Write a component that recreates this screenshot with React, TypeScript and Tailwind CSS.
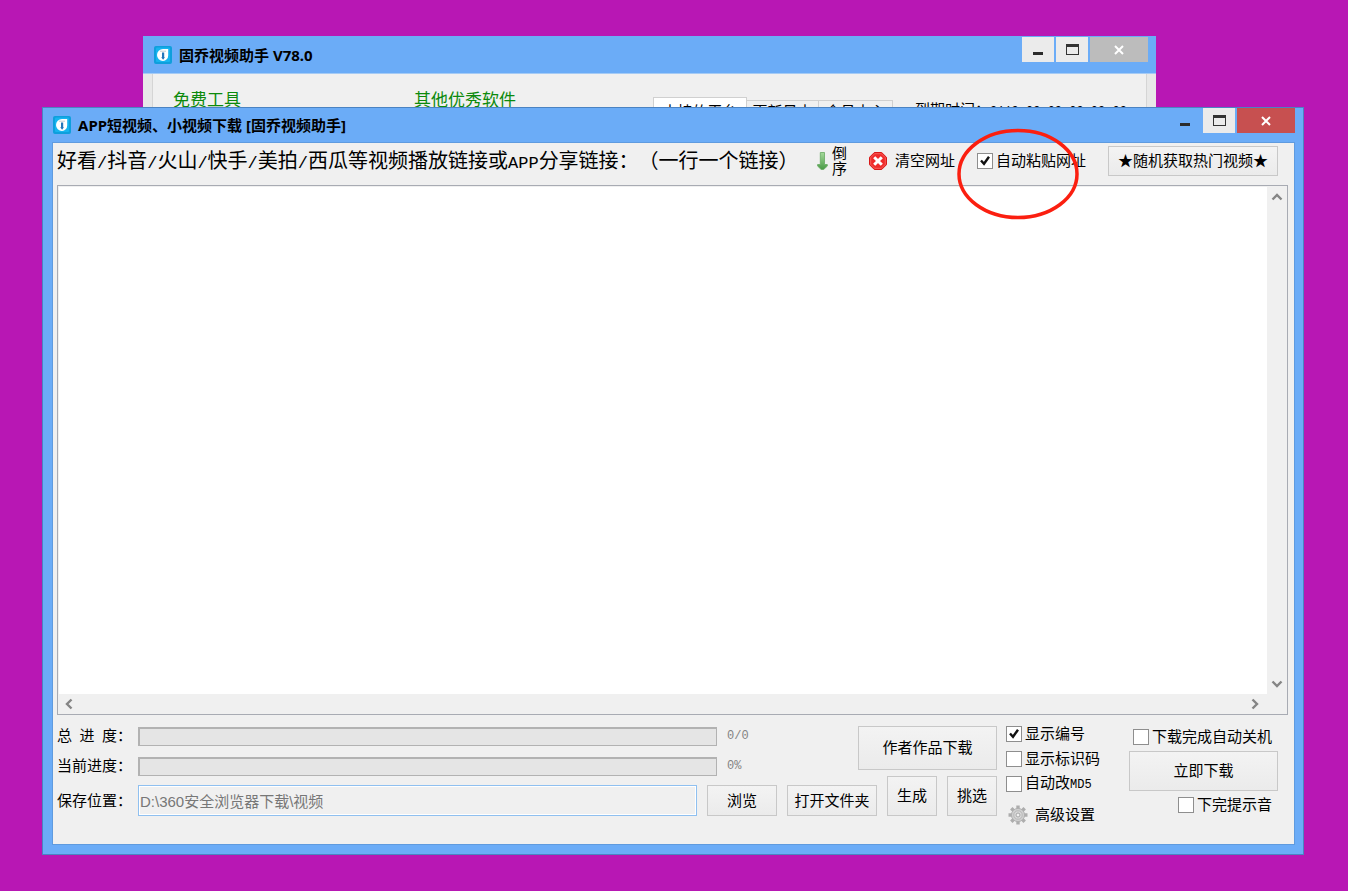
import type { ReactNode } from "react";

const titleFont = "font-['Noto_Sans','Noto_Sans_CJK_SC',sans-serif]";

/* ---------------------- ICONS ---------------------- */
function AppIcon() {
  return (
    <svg width="18" height="18" viewBox="0 0 18 18" aria-hidden="true">
      <rect width="18" height="18" rx="2" fill="#0e9fdc" />
      <rect x="2" y="1.5" width="14" height="14.5" rx="1" fill="#16b4ef" />
      <path d="M3 9a6 6 0 0 1 6-6h5.2v6.4A5.6 5.6 0 0 1 9 15a6 6 0 0 1-6-6z" fill="#fff" />
      <path d="M6 5.2h6" stroke="#c3cbd0" />
      <path d="M8 6.5h2.2v4.7h.8L9.1 13.8 7.2 11.2H8z" fill="#2476ba" />
    </svg>
  );
}

function ArrowDownIcon() {
  return (
    <svg width="11" height="18" viewBox="0 0 11 18" aria-hidden="true">
      <defs>
        <linearGradient id="arrow" x1="0" y1="0" x2="0" y2="1">
          <stop offset="0" stopColor="#a4d99a" />
          <stop offset="1" stopColor="#4a9a47" />
        </linearGradient>
      </defs>
      <path d="M3.3.5h4.2v12h2.8v1.6L6.6 17.5H4.2L.6 14.1v-1.6h2.7z" fill="url(#arrow)" stroke="#67aa62" strokeWidth=".8" />
    </svg>
  );
}

function ClearIcon() {
  return (
    <svg width="18" height="18" viewBox="0 0 18 18" aria-hidden="true">
      <path d="M5.3.5h7.4l4.8 4.8v7.4l-4.8 4.8H5.3L.5 12.7V5.3z" fill="#ef2b2b" stroke="#d81818" />
      <path d="M5.7 1.7h6.6l4 4v6.6l-4 4H5.7l-4-4V5.7z" fill="none" stroke="#f76a62" strokeWidth=".8" />
      <path d="M5.2 5.2l7.6 7.6M12.8 5.2l-7.6 7.6" stroke="#fff" strokeWidth="3" />
    </svg>
  );
}

function GearIcon() {
  return (
    <svg width="20" height="20" viewBox="0 0 20 20" aria-hidden="true">
      <path d="M10 .5v19M.5 10h19M3.3 3.3l13.4 13.4M16.7 3.3L3.3 16.7" stroke="#adadad" strokeWidth="3.4" />
      <circle cx="10" cy="10" r="6.6" fill="#cfcfcf" stroke="#b0b0b0" />
      <circle cx="10" cy="10" r="4.2" fill="#d9d9d9" stroke="#b8b8b8" />
      <circle cx="10" cy="10" r="2" fill="#f0f0f0" stroke="#a6a6a6" />
    </svg>
  );
}

function Chevron({ d }: { d: string }) {
  return (
    <svg width="12" height="12" viewBox="0 0 12 12" aria-hidden="true">
      <path d={d} fill="none" stroke="#858585" strokeWidth="2.4" />
    </svg>
  );
}

/* ---------------------- CONTROLS ---------------------- */
function WindowControls({ active }: { active: boolean }) {
  return (
    <div className="flex h-[25px] gap-0.5">
      <button
        aria-label="最小化"
        className={`flex w-8 items-center justify-center ${active ? "" : "bg-[#ebebeb]"}`}
      >
        <span className="mt-2 h-[3px] w-2.5 bg-[#2b2b2b]" />
      </button>
      <button aria-label="最大化" className="flex w-8 items-center justify-center bg-[#ebebeb]">
        <span className="h-[11px] w-[13px] border border-t-[3px] border-[#333]" />
      </button>
      <button
        aria-label="关闭"
        className={`flex w-[58px] items-center justify-center ${active ? "bg-[#c75050]" : "bg-[#bcbcbc]"}`}
      >
        <svg width="10" height="10" viewBox="0 0 10 10" aria-hidden="true">
          <path d="M1 1l8 8M9 1L1 9" stroke="#fff" strokeWidth="2" />
        </svg>
      </button>
    </div>
  );
}

function PushButton({ className, children }: { className: string; children: ReactNode }) {
  return (
    <button
      className={`shrink-0 whitespace-nowrap border border-[#c8c8c8] bg-linear-to-b from-[#f3f3f3] to-[#ebebeb] ${className}`}
    >
      {children}
    </button>
  );
}

function CheckBox({ label, checked = false }: { label: ReactNode; checked?: boolean }) {
  return (
    <label className="flex h-4 items-center gap-[3px] whitespace-nowrap">
      <span className="relative flex size-4">
        <input
          type="checkbox"
          defaultChecked={checked}
          className="peer size-4 appearance-none border border-[#8e8e8e] bg-white"
        />
        <svg
          viewBox="0 0 16 16"
          aria-hidden="true"
          className="pointer-events-none absolute inset-0 hidden size-4 peer-checked:block"
        >
          <path d="M4 7.5l3 3.3 5-7" fill="none" stroke="#111" strokeWidth="2.4" />
        </svg>
      </span>
      <span>{label}</span>
    </label>
  );
}

function ProgressRow({ label, value }: { label: string; value: string }) {
  return (
    <div className="flex h-5 items-center">
      <span className="w-[81px] shrink-0 whitespace-pre">{label}</span>
      <div
        role="progressbar"
        aria-label={label}
        aria-valuenow={0}
        className="h-[19px] flex-1 border border-t-2 border-l-2 border-[#b2b2b2] bg-[#e5e5e5]"
      />
      <span className="w-[141px] shrink-0 pl-2.5 font-['Liberation_Mono',monospace] text-[12px] text-[#838383]">
        {value}
      </span>
    </div>
  );
}

/* Latin runs inside the heading take half the width of a Chinese character */
function Half({ children }: { children: ReactNode }) {
  return <span className="font-['Liberation_Mono',monospace] text-[17px]">{children}</span>;
}

/* ---------------------- WINDOWS ---------------------- */
function MainWindow() {
  return (
    <section className="absolute top-9 right-[192px] left-[143px] h-[71px] overflow-hidden bg-[#6bacf7]">
      <header className={`flex h-[37px] items-start pt-px pr-2 pl-[11px] ${titleFont}`}>
        <div className="flex h-9 flex-1 items-center gap-[7px] text-[15px] font-bold">
          <AppIcon />
          <h2>固乔视频助手 V78.0</h2>
        </div>
        <WindowControls active={false} />
      </header>
      <div className="h-[59px] border-t border-[#a5cbf5] bg-[#e8e8e8] px-[9px]">
        <div className="flex h-full items-start border-x border-[#d5d5d5] bg-[#f0f0f0] pl-5">
          <div className="flex flex-1 pt-[15px] text-[17px] leading-6 text-[#0c8a0c]">
            <h3 className="w-[241px]">免费工具</h3>
            <h3>其他优秀软件</h3>
          </div>
          <div className="flex items-end pt-[23px] leading-5">
            <button className="flex h-9 w-[94px] justify-center border border-[#d0d0d0] bg-white pt-1">
              支持的平台
            </button>
            <button className="flex h-[33px] w-[72px] justify-center border border-l-0 border-[#d0d0d0] pt-px">
              更新日志
            </button>
            <button className="flex h-[33px] w-[74px] justify-center border border-l-0 border-[#d0d0d0] pt-px">
              会员中心
            </button>
          </div>
          <p className="w-[253px] pt-[26px] pl-[22px] leading-5 whitespace-nowrap">
            到期时间：
            <span className="font-['Liberation_Mono',monospace] text-[12px]">9119-09-09 09:09:09</span>
          </p>
        </div>
      </div>
    </section>
  );
}

function DownloadWindow() {
  return (
    <section className="relative flex flex-1 flex-col border border-[#4b83c2] bg-[#6bacf7] pr-2 pb-[9px] pl-[9px]">
      <header className={`flex h-[34px] shrink-0 items-start ${titleFont}`}>
        <div className="flex h-[34px] flex-1 items-center gap-[7px] pl-px text-[15px] font-bold">
          <AppIcon />
          <h1>APP短视频、小视频下载 [固乔视频助手]</h1>
        </div>
        <WindowControls active />
      </header>

      <div className="flex flex-1 flex-col border border-[#5f9bdf] bg-[#f0f0f0] px-1">
        {/* toolbar */}
        <div className="flex h-[42px] shrink-0 items-center pr-3 pb-1.5">
          <label
            htmlFor="links"
            className="flex-1 pt-[3px] text-[20px] leading-8 whitespace-nowrap [text-spacing-trim:space-all]"
          >
            好看<Half>/</Half>抖音<Half>/</Half>火山<Half>/</Half>快手<Half>/</Half>美拍
            <Half>/</Half>西瓜等视频播放链接或<Half>APP</Half>分享链接：（一行一个链接）
          </label>
          <div className="flex shrink-0 items-center gap-[22px]">
            <button className="flex items-center gap-1">
              <ArrowDownIcon />
              <span className="w-[15px] leading-[15px]">倒序</span>
            </button>
            <button className="flex items-center gap-2">
              <ClearIcon />
              清空网址
            </button>
            <div className="relative">
              <CheckBox label="自动粘贴网址" checked />
              <svg
                viewBox="0 0 124 94"
                aria-hidden="true"
                className="pointer-events-none absolute -top-[26px] -left-[21px] z-10 h-[94px] w-[124px]"
              >
                <ellipse cx="62" cy="47" rx="59" ry="43.5" fill="none" stroke="#fb1f10" strokeWidth="3.5" />
              </svg>
            </div>
            <PushButton className="h-[30px] w-[170px]">★随机获取热门视频★</PushButton>
          </div>
        </div>

        {/* link list */}
        <div className="mr-0.5 flex flex-1 flex-col border border-[#a8abb3] bg-[#f0f0f0] p-px">
          <div className="flex flex-1">
            <textarea id="links" className="flex-1 resize-none bg-white outline-none" />
            <div className="flex w-[19px] flex-col items-center justify-between bg-[#f0f0f0] py-1">
              <Chevron d="M1.5 8.5L6 4l4.5 4.5" />
              <Chevron d="M1.5 3.5L6 8l4.5-4.5" />
            </div>
          </div>
          <div className="flex h-[19px] items-center justify-between pr-[25px] pl-1">
            <Chevron d="M8.5 1.5L4 6l4.5 4.5" />
            <Chevron d="M3.5 1.5L8 6l-4.5 4.5" />
          </div>
        </div>

        {/* progress and options */}
        <footer className="flex shrink-0 items-start pt-[11px] pr-3 pb-[19px]">
          <div className="flex-1">
            <div className="flex h-[50px]">
              <div className="flex flex-1 flex-col gap-2.5">
                <ProgressRow label={"总\u2002进\u2002度："} value="0/0" />
                <ProgressRow label="当前进度：" value="0%" />
              </div>
              <PushButton className="h-11 w-[139px]">作者作品下载</PushButton>
            </div>
            <div className="flex items-end gap-2.5">
              <div className="flex h-[31px] flex-1 items-center">
                <label htmlFor="path" className="w-[81px] shrink-0">
                  保存位置：
                </label>
                <input
                  id="path"
                  readOnly
                  value="D:\360安全浏览器下载\视频"
                  className="h-[31px] min-w-0 flex-1 border border-[#8fc0f0] bg-[#f0f0f0] px-px text-[#777] outline-1 -outline-offset-2 outline-white"
                />
              </div>
              <PushButton className="h-[31px] w-[70px]">浏览</PushButton>
              <PushButton className="h-[31px] w-[90px]">打开文件夹</PushButton>
              <PushButton className="h-10 w-[50px]">生成</PushButton>
              <PushButton className="h-10 w-[50px]">挑选</PushButton>
            </div>
          </div>

          <div className="ml-[9px] flex w-[123px] flex-col items-start gap-[9px]">
            <CheckBox label="显示编号" checked />
            <CheckBox label="显示标识码" />
            <CheckBox
              label={
                <>
                  自动改<span className="font-['Liberation_Mono',monospace] text-[12px]">MD5</span>
                </>
              }
            />
            <button className="mt-1 ml-0.5 flex h-5 items-center gap-[7px]">
              <GearIcon />
              高级设置
            </button>
          </div>

          <div className="flex w-[149px] flex-col gap-1.5 pt-[3px]">
            <div className="pl-1">
              <CheckBox label="下载完成自动关机" />
            </div>
            <PushButton className="h-10 w-full">立即下载</PushButton>
            <div className="flex justify-end pr-1.5">
              <CheckBox label="下完提示音" />
            </div>
          </div>
        </footer>
      </div>
    </section>
  );
}

export default function App() {
  return (
    <main className="relative flex min-h-screen flex-col bg-[#b817b4] pt-[107px] pr-11 pb-9 pl-[42px] font-['Liberation_Sans','Noto_Sans_CJK_SC',sans-serif] text-[15px] leading-5 text-black">
      <MainWindow />
      <DownloadWindow />
    </main>
  );
}
